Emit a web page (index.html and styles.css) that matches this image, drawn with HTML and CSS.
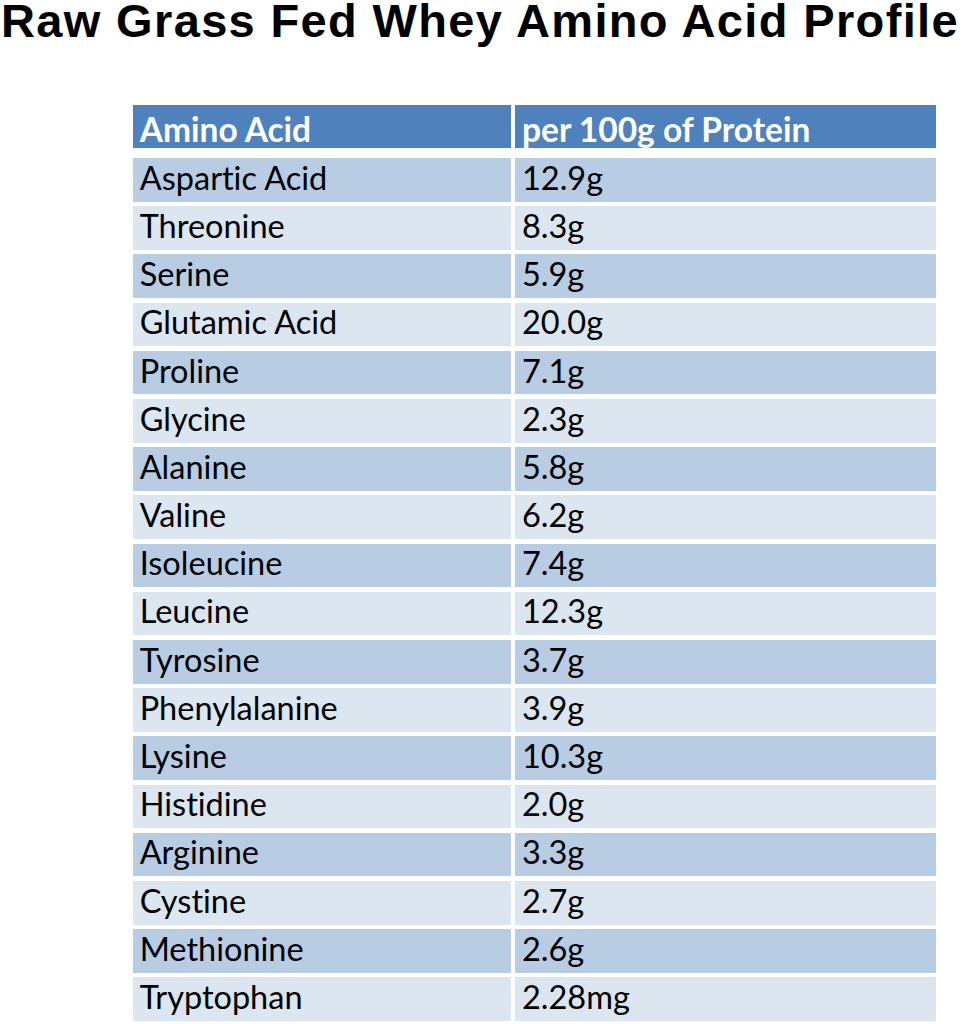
FILE: index.html
```html
<!DOCTYPE html>
<html>
<head>
<meta charset="utf-8">
<link rel="stylesheet" href="styles.css">
</head>
<body>
<h1 class="title"><span class="title-text">Raw Grass Fed Whey Amino Acid Profile</span></h1>
<div class="table">
  <div class="row head"><div class="cell">Amino Acid</div><div class="cell">per 100g of Protein</div></div>
  <div class="row dark"><div class="cell">Aspartic Acid</div><div class="cell">12.9g</div></div>
  <div class="row light"><div class="cell">Threonine</div><div class="cell">8.3g</div></div>
  <div class="row dark"><div class="cell">Serine</div><div class="cell">5.9g</div></div>
  <div class="row light"><div class="cell">Glutamic Acid</div><div class="cell">20.0g</div></div>
  <div class="row dark"><div class="cell">Proline</div><div class="cell">7.1g</div></div>
  <div class="row light"><div class="cell">Glycine</div><div class="cell">2.3g</div></div>
  <div class="row dark"><div class="cell">Alanine</div><div class="cell">5.8g</div></div>
  <div class="row light"><div class="cell">Valine</div><div class="cell">6.2g</div></div>
  <div class="row dark"><div class="cell">Isoleucine</div><div class="cell">7.4g</div></div>
  <div class="row light"><div class="cell">Leucine</div><div class="cell">12.3g</div></div>
  <div class="row dark"><div class="cell">Tyrosine</div><div class="cell">3.7g</div></div>
  <div class="row light"><div class="cell">Phenylalanine</div><div class="cell">3.9g</div></div>
  <div class="row dark"><div class="cell">Lysine</div><div class="cell">10.3g</div></div>
  <div class="row light"><div class="cell">Histidine</div><div class="cell">2.0g</div></div>
  <div class="row dark"><div class="cell">Arginine</div><div class="cell">3.3g</div></div>
  <div class="row light"><div class="cell">Cystine</div><div class="cell">2.7g</div></div>
  <div class="row dark"><div class="cell">Methionine</div><div class="cell">2.6g</div></div>
  <div class="row light"><div class="cell">Tryptophan</div><div class="cell">2.28mg</div></div>
</div>
</body>
</html>
```

FILE: styles.css
```css
html, body {
  margin: 0;
  padding: 0;
  background: #ffffff;
}

.title {
  margin: 0;
  padding-left: 1px;
  font-family: "Liberation Sans", Arial, sans-serif;
  font-weight: bold;
  font-size: 47px;
  line-height: 42px;
  color: #000000;
  white-space: nowrap;
}

.title-text {
  display: inline-block;
  letter-spacing: 1.35px;
}

.table {
  margin-top: 63px;
  margin-left: 132.7px;
  width: 803.3px;
  display: flex;
  flex-direction: column;
  gap: 4.6px;
  font-family: Lato, "Noto Sans", sans-serif;
  font-size: 32.5px;
  font-variant-ligatures: none;
}

.row {
  display: grid;
  grid-template-columns: 378px 421px;
  column-gap: 4.3px;
  height: 43.6px;
}

.cell {
  padding: 1.7px 0 0 7px;
  line-height: 36px;
  color: #000000;
  white-space: nowrap;
  overflow: hidden;
}

.head {
  height: 42.5px;
  margin-bottom: 6px;
}

.head .cell {
  background: #4f81bd;
  color: #ffffff;
  font-weight: bold;
  font-size: 33.5px;
  padding-top: 6px;
}

.dark .cell {
  background: #b8cce4;
}

.light .cell {
  background: #dce6f1;
}
```
